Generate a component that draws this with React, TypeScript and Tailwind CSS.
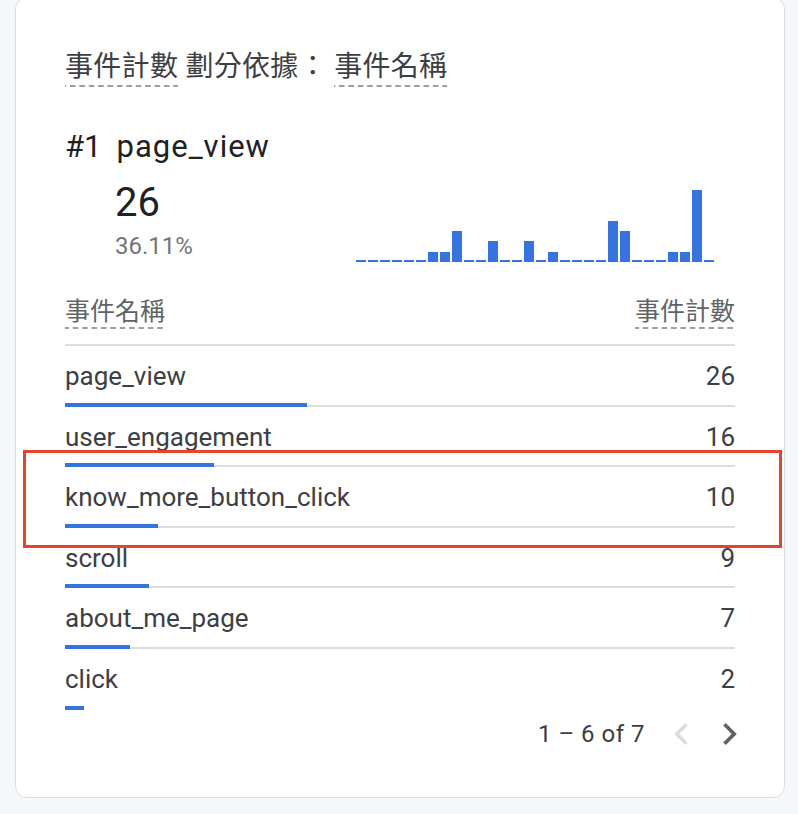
import React from 'react';

const FONT = "font-['Roboto','Noto_Sans_CJK_TC',sans-serif]";

interface EventRow {
  name: string;
  count: number;
}

const rows: EventRow[] = [
  { name: 'page_view', count: 26 },
  { name: 'user_engagement', count: 16 },
  { name: 'know_more_button_click', count: 10 },
  { name: 'scroll', count: 9 },
  { name: 'about_me_page', count: 7 },
  { name: 'click', count: 2 },
];

const total = 72;

// daily counts for page_view, 30 days
const daily = [0, 0, 0, 0, 0, 0, 1, 1, 3, 0, 0, 2, 0, 0, 2, 0, 1, 0, 0, 0, 0, 4, 3, 0, 0, 0, 1, 1, 7, 0];

const Dashed: React.FC<{ children: React.ReactNode; className?: string }> = ({ children, className = '' }) => (
  <span
    className={`inline-block bg-[linear-gradient(to_right,#9aa0a6_62%,transparent_62%)] bg-[length:9.4px_2px] bg-bottom bg-repeat-x ${className}`}
  >
    {children}
  </span>
);

const Chevron: React.FC<{ dir: 'left' | 'right'; color: string; className?: string }> = ({ dir, color, className = '' }) => (
  <svg viewBox="8 6 7.41 12" width="14" height="22" className={className}>
    {dir === 'left' ? (
      <path d="M15.41 7.41L14 6l-6 6 6 6 1.41-1.41L10.83 12z" fill={color} />
    ) : (
      <path d="M8 7.41L9.41 6l6 6-6 6L8 16.59 12.58 12z" fill={color} />
    )}
  </svg>
);

export default function App() {
  return (
    <div className={`relative w-[798px] h-[814px] overflow-hidden bg-[#f6f7f9] ${FONT}`}>
      <div className="ml-[15px] mt-[-3px] w-[770px] h-[801px] rounded-[12px] border border-[#dadce0] bg-white px-[49px] pt-[51px]">
        {/* card title */}
        <div className="text-[28px] leading-[36px] tracking-[0.3px] text-[#3c4043]">
          <Dashed className="pb-[2px]">事件計數</Dashed>
          <span> 劃分依據： </span>
          <Dashed className="pb-[2px]">事件名稱</Dashed>
        </div>

        {/* top item */}
        <div className="mt-[40px] text-[31px] leading-[40px] text-[#202124]">
          <span>#1</span>
          <span className="ml-[15px] tracking-[1px]">page_view</span>
        </div>
        <div className="flex items-end justify-between">
          <div className="pl-[50px] pb-[2px]">
            <div className="mt-[12px] text-[40px] leading-[48px] text-[#202124]">26</div>
            <div className="mt-[5px] text-[24px] leading-[28px] text-[#70757a]">36.11%</div>
          </div>
          <div className="mr-[21px] flex h-[74px] items-end gap-[2px]">
            {daily.map((v, i) => (
              <div
                key={i}
                className="w-[10px] bg-[#3574e0]"
                style={{ height: v === 0 ? 2 : Math.round(v * 10.3) }}
              />
            ))}
          </div>
        </div>

        {/* table */}
        <div className="mt-[34px] flex justify-between border-b-2 border-[#dadce0] pb-[15px] text-[25px] leading-[32px] text-[#5f6368]">
          <Dashed className="pb-[1px]">事件名稱</Dashed>
          <Dashed className="pb-[1px]">事件計數</Dashed>
        </div>
        {rows.map((r, i) => (
          <div key={r.name} className="flex h-[60.6px] flex-col justify-between pt-[14px]">
            <div className="flex justify-between text-[26px] leading-[32px] text-[#3c4043]">
              <span>{r.name}</span>
              <span>{r.count}</span>
            </div>
            <div className="relative h-[4px]">
              {i < rows.length - 1 && <div className="absolute bottom-0 left-0 right-0 h-[2px] bg-[#dadce0]" />}
              <div
                className="absolute bottom-0 left-0 h-[4px] bg-[#3574e0]"
                style={{ width: `${(r.count / total) * 100}%` }}
              />
            </div>
          </div>
        ))}

        {/* pagination */}
        <div className="mt-[8px] flex items-center justify-end text-[24px] leading-[32px] tracking-[0.5px] text-[#3c4043]">
          <span>1 – 6 of 7</span>
          <Chevron dir="left" color="#dadce0" className="ml-[29px]" />
          <Chevron dir="right" color="#5f6368" className="ml-[35px] mr-[-2px]" />
        </div>
      </div>

      {/* annotation */}
      <div className="absolute left-[23px] top-[450px] h-[98px] w-[759px] border-[3px] border-[#e8412c]" />
    </div>
  );
}
